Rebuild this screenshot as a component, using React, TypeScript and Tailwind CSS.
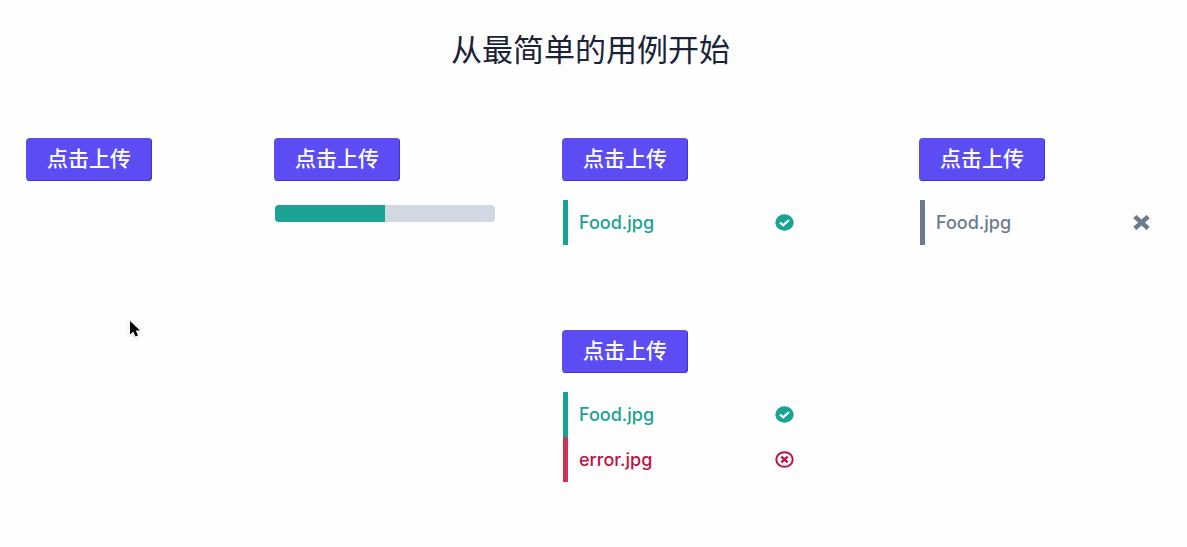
import type { ReactNode } from 'react';

type Status = 'success' | 'error' | 'removable';

interface UploadFile {
  name: string;
  status: Status;
}

const tones: Record<Status, string> = {
  success: 'border-[#1aa392] text-[#1aa392]',
  error: 'border-[#cc3654] text-[#b8173f]',
  removable: 'border-[#6c7c8f] text-[#6c7c8f]',
};

function CheckCircleIcon() {
  return (
    <svg width="19" height="17" viewBox="0 0 19 17" fill="none" aria-hidden="true">
      <ellipse cx="9.5" cy="8.5" rx="9.2" ry="8.3" fill="currentColor" />
      <path d="M5 8.5l3.2 2.8 5.7-5.2" stroke="#fefefe" strokeWidth="2.3" />
    </svg>
  );
}

function ErrorCircleIcon() {
  return (
    <svg width="19" height="17" viewBox="0 0 19 17" fill="none" stroke="currentColor" strokeWidth="2" aria-hidden="true">
      <ellipse cx="9.5" cy="8.5" rx="8.2" ry="7.3" />
      <path d="M6.3 5.6l6.4 5.8M12.7 5.6l-6.4 5.8" strokeWidth="2.4" />
    </svg>
  );
}

function CrossIcon() {
  return (
    <svg width="17" height="15" viewBox="0 0 17 15" fill="none" stroke="currentColor" strokeWidth="4.6" aria-hidden="true">
      <path d="M1.8 1.6l13.4 11.8M15.2 1.6L1.8 13.4" />
    </svg>
  );
}

function StatusIcon({ status }: { status: Status }) {
  if (status === 'success') return <CheckCircleIcon />;
  if (status === 'error') return <ErrorCircleIcon />;
  return (
    <button type="button" aria-label="Remove file" className="mr-px cursor-pointer">
      <CrossIcon />
    </button>
  );
}

function Upload({ children }: { children?: ReactNode }) {
  return (
    <div className="flex flex-col items-start gap-[19px]">
      <button
        type="button"
        className="rounded bg-[#5b4cf3] px-[21px] py-[6px] text-[21px] leading-[31px] font-medium text-white shadow-[inset_-1px_-1px_0_#4630cf]"
      >
        点击上传
      </button>
      {children}
    </div>
  );
}

function FileList({ files }: { files: UploadFile[] }) {
  return (
    <ul className="ml-px w-full max-w-[233px]">
      {files.map((file) => (
        <li
          key={file.name}
          className={`flex h-[45px] items-center justify-between border-l-[5px] pr-[2px] pl-[11px] font-['Inter',sans-serif] text-[18px] font-medium ${tones[file.status]}`}
        >
          <span>{file.name}</span>
          <StatusIcon status={file.status} />
        </li>
      ))}
    </ul>
  );
}

function ProgressBar({ value }: { value: number }) {
  return (
    <div
      role="progressbar"
      aria-label="Upload progress"
      aria-valuenow={value}
      aria-valuemin={0}
      aria-valuemax={100}
      className="mt-[5px] ml-px h-[17px] w-full max-w-[220px] overflow-hidden rounded bg-[#d2d8e1]"
    >
      <div className="h-full bg-[#1ca393]" style={{ width: `${value}%` }} />
    </div>
  );
}

function Pointer() {
  return (
    <svg
      className="absolute top-[319px] left-[127px] drop-shadow-sm"
      width="16"
      height="22"
      viewBox="0 0 16 22"
      aria-hidden="true"
    >
      <path
        d="M3 2v13.5l3.2-2.9 2.3 4.9 2.5-1.1-2.2-4.8H13z"
        fill="#000"
        stroke="#fff"
        strokeWidth="1.6"
        paintOrder="stroke"
      />
    </svg>
  );
}

export default function App() {
  return (
    <main className="relative min-h-screen bg-[#fefefe] pt-[29px] pr-[30px] pb-16 pl-[26px] font-['Roboto','Noto_Sans_CJK_SC',sans-serif]">
      <h1 className="pr-[2px] text-center text-[31px] leading-[44px] text-[#1a2338]">从最简单的用例开始</h1>
      <div className="mt-[65px] grid grid-cols-[248fr_288fr_357fr_238fr] items-start">
        <Upload />
        <Upload>
          <ProgressBar value={50} />
        </Upload>
        <div className="flex flex-col gap-[85px]">
          <Upload>
            <FileList files={[{ name: 'Food.jpg', status: 'success' }]} />
          </Upload>
          <Upload>
            <FileList
              files={[
                { name: 'Food.jpg', status: 'success' },
                { name: 'error.jpg', status: 'error' },
              ]}
            />
          </Upload>
        </div>
        <Upload>
          <FileList files={[{ name: 'Food.jpg', status: 'removable' }]} />
        </Upload>
      </div>
      <Pointer />
    </main>
  );
}
